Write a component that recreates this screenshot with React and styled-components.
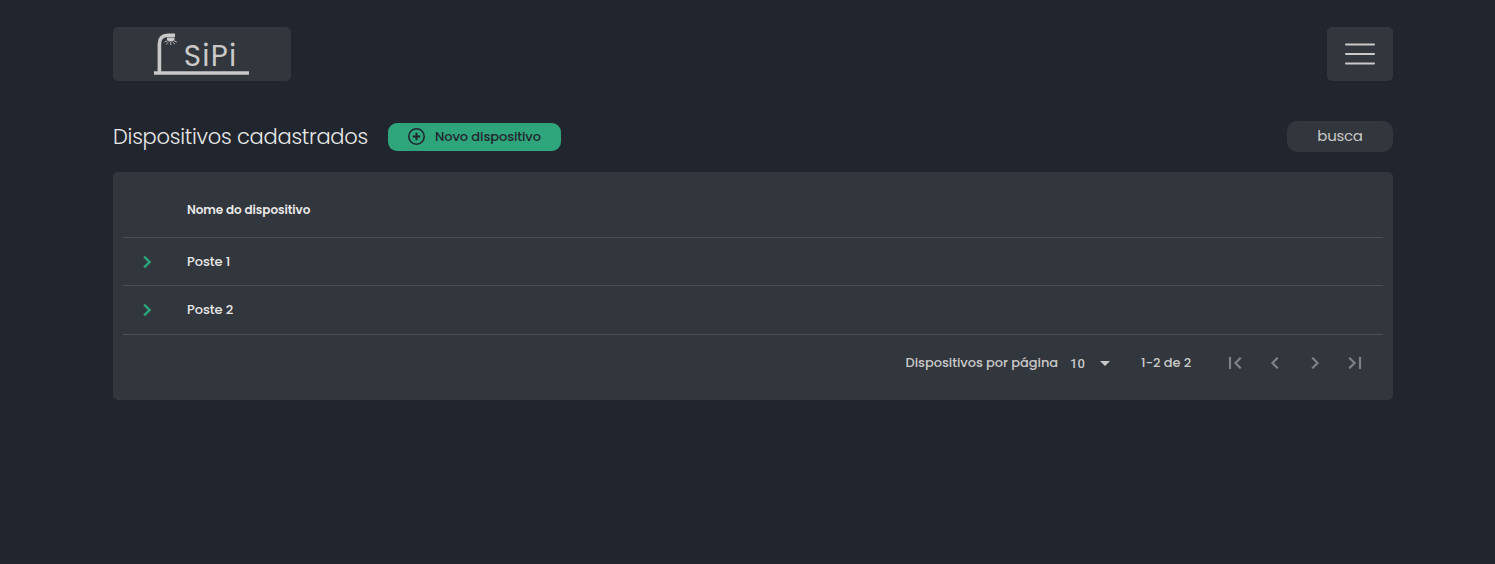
import React from "react";
import styled, { createGlobalStyle } from "styled-components";

const Global = createGlobalStyle`
  *, *::before, *::after { box-sizing: border-box; }
  body {
    margin: 0;
    min-height: 564px;
    background: #21252d;
    color: #e1e1e6;
    font-family: Poppins, Inter, "Liberation Sans", sans-serif;
  }
  button { border: 0; margin: 0; padding: 0; background: none; font: inherit; color: inherit; cursor: pointer; }
`;

const Page = styled.div`
  width: 1280px;
  height: 564px;
  margin-left: 113px;
  padding-top: 27px;
`;

const Header = styled.header`
  display: flex;
  justify-content: space-between;
  height: 54px;
`;

const Logo = styled.a`
  display: flex;
  width: 178px;
  border-radius: 5px;
  background: #32363d;
`;

const MenuButton = styled.button`
  display: flex;
  align-items: center;
  justify-content: center;
  width: 66px;
  border-radius: 5px;
  background: #32363d;
`;

const Toolbar = styled.div`
  display: flex;
  align-items: center;
  height: 31px;
  margin: 40px 0 20px;
`;

const Text = styled.span`
  display: block;
  flex: none;
  white-space: nowrap;
  font-family: ${(p) => p.$font || "inherit"};
  font-size: ${(p) => p.$size || 13}px;
  font-weight: ${(p) => p.$weight || 500};
  letter-spacing: ${(p) => p.$spacing || 0}px;
  width: ${(p) => (p.$width ? `${p.$width}px` : "auto")};
  color: ${(p) => p.$color || "#e8e8e8"};
  line-height: 20px;
`;

const Title = styled.h1`
  width: 275px;
  margin: 0;
  font-size: 21px;
  font-weight: 300;
  line-height: 30px;
  letter-spacing: -0.25px;
  white-space: nowrap;
  color: #e8e8e8;
`;

const NewButton = styled.button`
  display: flex;
  align-items: center;
  gap: 9px;
  width: 173px;
  height: 28px;
  padding-left: 19px;
  border-radius: 9px;
  background: #2fa57c;
`;

const Search = styled.button`
  display: flex;
  align-items: center;
  justify-content: center;
  width: 106px;
  height: 31px;
  margin-left: auto;
  padding-bottom: 2px;
  border-radius: 10px;
  background: #32363d;
`;

const Card = styled.main`
  height: 228px;
  padding: 10px;
  border-radius: 5px;
  background: #32363d;
`;

const Row = styled.div`
  display: flex;
  align-items: center;
  height: ${(p) => p.$height}px;
  border-bottom: 1px solid #4b5054;
`;

const Expand = styled.button`
  display: flex;
  align-items: center;
  justify-content: center;
  width: 48px;
  height: 40px;
  margin-right: 16px;
`;

const Footer = styled.footer`
  display: flex;
  align-items: center;
  justify-content: flex-end;
  height: 56px;
  padding-right: 8px;
`;

const Select = styled.button`
  display: flex;
  align-items: center;
  justify-content: space-between;
  width: 47px;
  height: 24px;
  margin: 0 24px 0 12px;
`;

const PageSize = styled(Text)`
  padding-top: 2px;
  font-family: Roboto, sans-serif;
`;

const Pages = styled.nav`
  display: flex;
  margin-left: 24px;
`;

const PageButton = styled.button`
  display: flex;
  align-items: center;
  justify-content: center;
  width: 40px;
  height: 40px;
`;

const PAGE_ICONS = [
  { label: "Primeira", d: "M18.41 16.59 13.82 12l4.59-4.59L17 6l-6 6 6 6zM6 6h2v12H6z" },
  { label: "Anterior", d: "M15.41 7.41 14 6l-6 6 6 6 1.41-1.41L10.83 12z" },
  { label: "Próxima", d: "M10 6 8.59 7.41 13.17 12l-4.58 4.59L10 18l6-6z" },
  { label: "Última", d: "M5.59 7.41 10.18 12l-4.59 4.59L7 18l6-6-6-6zM16 6h2v12h-2z" },
];

const Chevron = ({ d, color, stroke = 0 }) => (
  <svg width="24" height="24" viewBox="0 0 24 24" fill={color} stroke={color} strokeWidth={stroke}>
    <path d={d} />
  </svg>
);

const LogoArt = () => (
  <svg width="178" height="54" viewBox="0 0 178 54" fill="none" stroke="#c9c9c9">
    <path d="M41 46H136" strokeWidth="3.4" />
    <path d="M46.4 46V17Q46.4 8.3 55 8.3H62" strokeWidth="3.6" />
    <path d="M54 10.5h7.5V13q-3.7 3-7.5 0Z" fill="#c9c9c9" stroke="none" />
    <path d="M54.5 13.8 51.6 15M55.6 15 53.4 17.2M57.8 15.2V18M59.8 15 62 17.2M61 13.8 63.8 15" strokeWidth=".9" />
    <text
      x="70.8"
      y="39"
      fill="#c9c9c9"
      stroke="none"
      fontFamily="Poppins, Inter, sans-serif"
      fontSize="29.5"
      fontWeight="400"
      textLength="52.5"
    >
      SiPi
    </text>
  </svg>
);

export default function App() {
  return (
    <>
      <Global />
      <Page>
        <Header>
          <Logo><LogoArt /></Logo>
          <MenuButton aria-label="Menu">
            <svg width="30" height="24" viewBox="0 0 30 24" stroke="#c9c9c9" strokeWidth="2" strokeLinecap="round">
              <path d="M1 2.5H29M1 12H29M1 21.4H29" />
            </svg>
          </MenuButton>
        </Header>
        <Toolbar>
          <Title>Dispositivos cadastrados</Title>
          <NewButton>
            <svg width="19" height="19" viewBox="0 0 19 19" fill="none" stroke="#21252d">
              <circle cx="9.5" cy="9.5" r="7.7" strokeWidth="1.6" />
              <path d="M9.5 5.7v7.6M5.7 9.5h7.6" strokeWidth="2" />
            </svg>
            <Text $color="#21252d" $spacing={-0.1}>Novo dispositivo</Text>
          </NewButton>
          <Search>
            <Text $size={15} $weight={400} $color="#c9c9c9" $spacing={-0.3}>busca</Text>
          </Search>
        </Toolbar>
        <Card>
          <Row $height={56}>
            <Expand as="span" />
            <Text $size={12} $weight={600} $spacing={-0.06}>Nome do dispositivo</Text>
          </Row>
          {["Poste 1", "Poste 2"].map((name, i) => (
            <Row key={name} $height={48 + i}>
              <Expand aria-label={`Abrir ${name}`}>
                <Chevron d={PAGE_ICONS[2].d} color="#2fa57c" stroke={0.5} />
              </Expand>
              <Text $spacing={-0.06}>{name}</Text>
            </Row>
          ))}
          <Footer>
            <Text $color="#c9c9c9" $spacing={-0.07}>Dispositivos por página</Text>
            <Select>
              <PageSize $color="#c9c9c9">10</PageSize>
              <Chevron d="m7 10 5 5 5-5z" color="#c9c9c9" />
            </Select>
            <Text $color="#c9c9c9" $width={50} $spacing={-0.06}>1-2 de 2</Text>
            <Pages>
              {PAGE_ICONS.map((icon) => (
                <PageButton key={icon.label} aria-label={icon.label}>
                  <Chevron d={icon.d} color="#7f8286" stroke={0.2} />
                </PageButton>
              ))}
            </Pages>
          </Footer>
        </Card>
      </Page>
    </>
  );
}
